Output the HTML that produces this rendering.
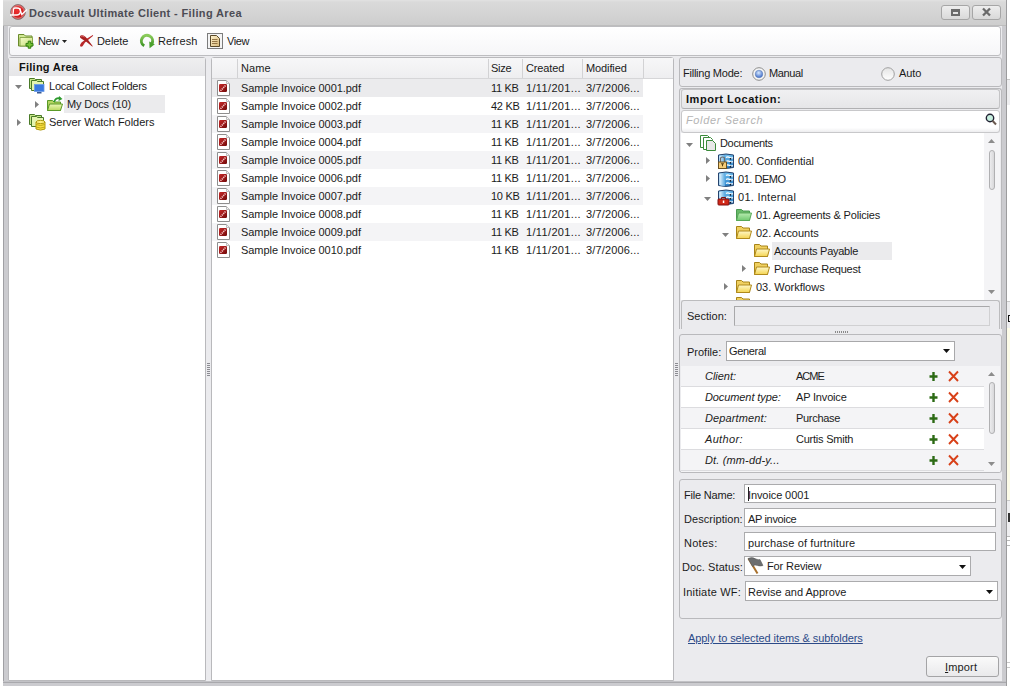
<!DOCTYPE html><html><head><meta charset="utf-8"><style>
*{box-sizing:border-box;margin:0;padding:0}
html,body{width:1010px;height:686px;overflow:hidden;background:#fff;font-family:"Liberation Sans",sans-serif;font-size:11px;color:#1b1b1b}
.a{position:absolute}
.t{position:absolute;white-space:nowrap;line-height:13px}
svg{position:absolute;overflow:visible}
</style></head><body>
<div class="a" style="left:1007px;top:0px;width:3px;height:686px;background:#fff"></div>
<div class="a" style="left:1007px;top:79px;width:3px;height:26px;background:#eeeef0;border-top:1px solid #c8c8c8"></div>
<div class="a" style="left:1007px;top:301px;width:3px;height:27px;background:#eeeef0;border-top:1px solid #c8c8c8"></div>
<div class="a" style="left:1008px;top:315px;width:2px;height:7px;border:1.5px solid #111;border-right:none"></div>
<div class="a" style="left:1007px;top:328px;width:3px;height:172px;background:#fdfce8"></div>
<div class="a" style="left:1007px;top:500px;width:3px;height:36px;background:#eeeef0;border-top:1px solid #c8c8c8"></div>
<div class="a" style="left:1008px;top:513px;width:2px;height:9px;background:#333"></div>
<div class="a" style="left:1007px;top:536px;width:3px;height:1px;background:#b8b8b8"></div>
<div class="a" style="left:1007px;top:540px;width:3px;height:1px;background:#b8b8b8"></div>
<div class="a" style="left:1007px;top:545px;width:3px;height:1px;background:#b8b8b8"></div>
<div class="a" style="left:1007px;top:662px;width:3px;height:1px;background:#c8c8c8"></div>
<div class="a" style="left:1007px;top:667px;width:3px;height:1px;background:#c8c8c8"></div>
<div class="a" style="left:3px;top:0px;width:1004px;height:686px;background:#cbcbcf;border-left:1px solid #a0a0a4;border-right:1px solid #9c9c9e"></div>
<div class="a" style="left:8px;top:26px;width:994px;height:655px;background:#ebebee"></div>
<div class="a" style="left:3px;top:0px;width:1003px;height:26px;background:linear-gradient(#e2e2e2 0,#dadada 2px,#cdcdcd 100%)"></div>
<div class="a" style="left:3px;top:25px;width:1003px;height:1px;background:#bdbdbd"></div>
<div class="a" style="left:3px;top:681px;width:1003px;height:5px;background:#cbcbcf"></div>
<div class="a" style="left:3px;top:681px;width:1003px;height:1px;background:#c2c2c6"></div>
<div class="a" style="left:3px;top:682px;width:1003px;height:1px;background:#a9a9ad"></div>
<svg style="left:9px;top:3px" width="19" height="19" viewBox="0 0 19 19"><defs><radialGradient id="lg" cx="45%" cy="40%" r="60%"><stop offset="0" stop-color="#f03030"/><stop offset="1" stop-color="#c01818"/></radialGradient></defs><circle cx="9" cy="9" r="7.4" fill="url(#lg)" stroke="#8a7a7a" stroke-width="1"/><circle cx="9" cy="9" r="6.3" fill="none" stroke="#f8c8c8" stroke-width="0.6"/><path d="M1 12 L8 12 Q11.5 11.5 11.5 8 Q11.5 5 8 5 L6 5 Q4.5 5 4.5 6.5 L4 11.8" fill="none" stroke="#fff" stroke-width="1.3"/><path d="M10.5 5 L12.8 11.5 L18 6.5" fill="none" stroke="#fff" stroke-width="1.3"/></svg>
<div class="t" style="left:29px;top:7px;font-size:11px;color:#4c4c54;font-weight:bold;letter-spacing:0.36px">Docsvault Ultimate Client - Filing Area</div>
<div class="a" style="left:941px;top:5px;width:29px;height:15px;border:1px solid #a6a6a6;border-radius:3px;background:linear-gradient(#eeeeee,#d9d9d9)"></div>
<div class="a" style="left:972px;top:5px;width:29px;height:15px;border:1px solid #a6a6a6;border-radius:3px;background:linear-gradient(#eeeeee,#d9d9d9)"></div>
<div class="a" style="left:951px;top:9px;width:9px;height:7px;border:2px solid #6b6b6b;border-top-width:3px"></div>
<svg style="left:982px;top:8px" width="9" height="8" viewBox="0 0 9 8"><path d="M1 0.5 L8 7.5 M8 0.5 L1 7.5" stroke="#6b6b6b" stroke-width="2.3"/></svg>
<div class="a" style="left:9px;top:26px;width:992px;height:30px;border:1px solid #bdbdc0;border-radius:3px;background:linear-gradient(#ffffff,#f6f6f8)"></div>
<svg style="left:18px;top:34px" width="17" height="15" viewBox="0 0 17 15"><defs><linearGradient id="fg" x1="0" y1="0" x2="1" y2="1"><stop offset="0" stop-color="#f4fcc8"/><stop offset="1" stop-color="#c4dc78"/></linearGradient></defs><path d="M0.5 0.5 h5.5 l1.5 1.5 h6.5 v10 h-13.5z" fill="#d0e894" stroke="#6a8a2c"/><path d="M2 3.5 h12.5 v8.5 h-12.5z" fill="url(#fg)" stroke="#7a9a38" stroke-width="0.8"/><path d="M10.2 7.2 h2.6 v2.2 h2.2 v2.6 h-2.2 v2.2 h-2.6 v-2.2 h-2.2 v-2.6 h2.2 z" fill="#78c436" stroke="#2e7a10" stroke-width="1"/></svg>
<div class="t" style="left:38px;top:35px;font-size:11px;;letter-spacing:-0.4px">New</div>
<svg style="left:62px;top:40px" width="5" height="3" viewBox="0 0 5 3"><path d="M0 0 L5 0 L2.5 3 Z" fill="#222"/></svg>
<svg style="left:76px;top:30px" width="22" height="22" viewBox="0 0 22 22"><path d="M16.8 5 L17.2 5.8 L9 12.5 L6.5 16.3 Q4.5 17.5 4 15.5 Q4 14.5 5.5 12.5 L9.5 9.5 Z" fill="#b8282a"/><path d="M4 6.5 Q4.5 4.5 7.5 5.5 Q9.5 6.5 11 8.5 L16.8 16.3 L16.2 16.6 L10 11.5 Q6 9 4.8 8.3 Q3.8 7.5 4 6.5 Z" fill="#a82020"/><path d="M5 6.3 Q6.5 5.6 8.5 7" stroke="#e07070" stroke-width="0.8" fill="none"/></svg>
<div class="t" style="left:97px;top:35px;font-size:11px;;letter-spacing:-0.08px">Delete</div>
<svg style="left:139px;top:33px" width="16" height="16" viewBox="0 0 16 16"><defs><linearGradient id="rf" x1="0" y1="0" x2="0" y2="1"><stop offset="0" stop-color="#8ccc5c"/><stop offset="1" stop-color="#3e9424"/></linearGradient></defs><path d="M5.2 12.8 A5.6 5.6 0 1 1 12.9 10.6" fill="none" stroke="url(#rf)" stroke-width="3"/><path d="M15.8 11.2 L10.2 8.6 L10.6 15.2 Z" fill="#4aa02c"/></svg>
<div class="t" style="left:158px;top:35px;font-size:11px;;letter-spacing:0.15px">Refresh</div>
<svg style="left:207px;top:33px" width="16" height="16" viewBox="0 0 16 16"><rect x="0.5" y="0.5" width="15" height="15" fill="#f4f4f4" stroke="#7c7c7c"/><defs><linearGradient id="vw" x1="0" y1="0" x2="1" y2="1"><stop offset="0" stop-color="#fff4d0"/><stop offset="1" stop-color="#d8b878"/></linearGradient></defs><path d="M3.5 2.5 h6 l3 3 v8 h-9z" fill="url(#vw)" stroke="#5a4a2a"/><path d="M5 6.5 h5.5 M5 8.5 h5.5 M5 10.5 h5.5" stroke="#8a6a3a" stroke-width="0.9"/></svg>
<div class="t" style="left:227px;top:35px;font-size:11px;;letter-spacing:-0.4px">View</div>
<div class="a" style="left:8px;top:57px;width:198px;height:624px;background:#fff;border:1px solid #b9b9bc;border-radius:3px 3px 0 0"></div>
<div class="a" style="left:9px;top:58px;width:196px;height:18px;background:linear-gradient(#efeff0,#e6e6e8)"></div>
<div class="t" style="left:19px;top:61px;font-size:11px;font-weight:bold;color:#111;letter-spacing:0.25px">Filing Area</div>
<svg style="left:15px;top:85px" width="7" height="4" viewBox="0 0 7 4"><path d="M0 0 L7 0 L3.5 4 Z" fill="#808080"/></svg>
<svg style="left:29px;top:78px" width="16" height="17" viewBox="0 0 16 17"><path d="M0.5 0.5 h5 l1 1 h6 v9 h-12z" fill="#c8e888" stroke="#4a7a28"/><path d="M2.5 2.5 h5 l1 1 h6 v9 h-12z" fill="#e4f4b0" stroke="#4a7a28"/><rect x="5.5" y="6.5" width="9.5" height="7" fill="#3a7ae0" stroke="#6a9ae8" stroke-width="0.8"/><rect x="8" y="14" width="4.5" height="1.5" fill="#3a5a90"/></svg>
<div class="t" style="left:49px;top:80px;font-size:11px;;letter-spacing:-0.23px">Local Collect Folders</div>
<div class="a" style="left:64px;top:95px;width:101px;height:18px;background:#ebebed"></div>
<svg style="left:35px;top:101px" width="4" height="7" viewBox="0 0 4 7"><path d="M0 0 L0 7 L4 3.5 Z" fill="#808080"/></svg>
<svg style="left:47px;top:96px" width="16" height="16" viewBox="0 0 16 16"><defs><linearGradient id="mg" x1="0" y1="0" x2="0" y2="1"><stop offset="0" stop-color="#eef8b8"/><stop offset="1" stop-color="#b8d860"/></linearGradient></defs><path d="M0.5 4.5 h5 l1.5 1.5 h6.5 v8.5 h-13z" fill="#b4d460" stroke="#5a9a28"/><path d="M0.5 14.5 L2.5 8 H15.5 L13.5 14.5 Z" fill="url(#mg)" stroke="#5a9a28"/><path d="M7 6 Q9 1 13.5 2.5" fill="none" stroke="#2e9a2e" stroke-width="1.8"/><path d="M12 0 L15.5 3 L11.5 5 Z" fill="#2e9a2e"/></svg>
<div class="t" style="left:67px;top:98px;font-size:11px;;letter-spacing:-0.12px">My Docs (10)</div>
<svg style="left:17px;top:119px" width="4" height="7" viewBox="0 0 4 7"><path d="M0 0 L0 7 L4 3.5 Z" fill="#808080"/></svg>
<svg style="left:29px;top:114px" width="17" height="17" viewBox="0 0 17 17"><path d="M0.5 0.5 h5 l1 1 h6 v9 h-12z" fill="#c8e888" stroke="#4a7a28"/><path d="M2.5 2.5 h5 l1 1 h6 v9 h-12z" fill="#e4f4b0" stroke="#4a7a28"/><path d="M7 8 v7 q4.5 2.2 9 0 v-7" fill="#f8e040" stroke="#b09a10"/><ellipse cx="11.5" cy="8" rx="4.5" ry="1.6" fill="#fff080" stroke="#b09a10"/><path d="M7 10.5 q4.5 2 9 0 M7 13 q4.5 2 9 0" fill="none" stroke="#c0a818"/></svg>
<div class="t" style="left:49px;top:116px;font-size:11px;;letter-spacing:-0.03px">Server Watch Folders</div>
<div class="a" style="left:207px;top:363px;width:3px;height:1px;background:#8c8c92"></div>
<div class="a" style="left:207px;top:365px;width:3px;height:1px;background:#8c8c92"></div>
<div class="a" style="left:207px;top:367px;width:3px;height:1px;background:#8c8c92"></div>
<div class="a" style="left:207px;top:369px;width:3px;height:1px;background:#8c8c92"></div>
<div class="a" style="left:207px;top:371px;width:3px;height:1px;background:#8c8c92"></div>
<div class="a" style="left:207px;top:373px;width:3px;height:1px;background:#8c8c92"></div>
<div class="a" style="left:207px;top:375px;width:3px;height:1px;background:#8c8c92"></div>
<div class="a" style="left:211px;top:57px;width:463px;height:624px;background:#fff;border:1px solid #b9b9bc;border-radius:3px 3px 0 0"></div>
<div class="a" style="left:212px;top:58px;width:461px;height:20px;background:linear-gradient(#f7f7f8,#eeeef0)"></div>
<div class="a" style="left:212px;top:78px;width:461px;height:1px;background:#d6d6d8"></div>
<div class="a" style="left:237px;top:59px;width:1px;height:19px;background:#d2d2d4"></div>
<div class="a" style="left:488px;top:59px;width:1px;height:19px;background:#d2d2d4"></div>
<div class="a" style="left:522px;top:59px;width:1px;height:19px;background:#d2d2d4"></div>
<div class="a" style="left:582px;top:59px;width:1px;height:19px;background:#d2d2d4"></div>
<div class="a" style="left:643px;top:59px;width:1px;height:19px;background:#d2d2d4"></div>
<div class="t" style="left:241px;top:62px;font-size:11px;;letter-spacing:0.1px">Name</div>
<div class="t" style="left:491px;top:62px;font-size:11px;;letter-spacing:-0.3px">Size</div>
<div class="t" style="left:526px;top:62px;font-size:11px;;letter-spacing:-0.13px">Created</div>
<div class="t" style="left:586px;top:62px;font-size:11px;;letter-spacing:-0.11px">Modified</div>
<div class="a" style="left:212px;top:79px;width:431px;height:18px;background:#ebebed"></div>
<svg style="left:216px;top:80px" width="15" height="17" viewBox="0 0 15 17"><path d="M1.5 0.5 h9 l3 3 v12 h-12z" fill="#fff" stroke="#8e8e8e"/><path d="M10.5 0.5 v3 h3" fill="#f4f4f4" stroke="#c0c0c0"/><defs><linearGradient id="pg" x1="0" y1="0" x2="1" y2="1"><stop offset="0" stop-color="#c82828"/><stop offset="1" stop-color="#700a0a"/></linearGradient></defs><rect x="3" y="4" width="8" height="8" rx="1.2" fill="url(#pg)"/><path d="M4.5 10.8 L9.8 5.2" stroke="#f6c8c8" stroke-width="1.6" stroke-dasharray="1.2 0.8"/></svg>
<div class="t" style="left:241px;top:82px;font-size:11px;;letter-spacing:-0.05px">Sample Invoice 0001.pdf</div>
<div class="t" style="left:491px;top:82px;font-size:11px;;letter-spacing:-0.3px">11 KB</div>
<div class="t" style="left:526px;top:82px;font-size:11px;;letter-spacing:0.35px">1/11/201...</div>
<div class="t" style="left:586px;top:82px;font-size:11px;;letter-spacing:0.15px">3/7/2006...</div>
<svg style="left:216px;top:98px" width="15" height="17" viewBox="0 0 15 17"><path d="M1.5 0.5 h9 l3 3 v12 h-12z" fill="#fff" stroke="#8e8e8e"/><path d="M10.5 0.5 v3 h3" fill="#f4f4f4" stroke="#c0c0c0"/><defs><linearGradient id="pg" x1="0" y1="0" x2="1" y2="1"><stop offset="0" stop-color="#c82828"/><stop offset="1" stop-color="#700a0a"/></linearGradient></defs><rect x="3" y="4" width="8" height="8" rx="1.2" fill="url(#pg)"/><path d="M4.5 10.8 L9.8 5.2" stroke="#f6c8c8" stroke-width="1.6" stroke-dasharray="1.2 0.8"/></svg>
<div class="t" style="left:241px;top:100px;font-size:11px;;letter-spacing:-0.05px">Sample Invoice 0002.pdf</div>
<div class="t" style="left:491px;top:100px;font-size:11px;;letter-spacing:-0.3px">42 KB</div>
<div class="t" style="left:526px;top:100px;font-size:11px;;letter-spacing:0.35px">1/11/201...</div>
<div class="t" style="left:586px;top:100px;font-size:11px;;letter-spacing:0.15px">3/7/2006...</div>
<div class="a" style="left:212px;top:115px;width:431px;height:18px;background:#f4f4f6"></div>
<svg style="left:216px;top:116px" width="15" height="17" viewBox="0 0 15 17"><path d="M1.5 0.5 h9 l3 3 v12 h-12z" fill="#fff" stroke="#8e8e8e"/><path d="M10.5 0.5 v3 h3" fill="#f4f4f4" stroke="#c0c0c0"/><defs><linearGradient id="pg" x1="0" y1="0" x2="1" y2="1"><stop offset="0" stop-color="#c82828"/><stop offset="1" stop-color="#700a0a"/></linearGradient></defs><rect x="3" y="4" width="8" height="8" rx="1.2" fill="url(#pg)"/><path d="M4.5 10.8 L9.8 5.2" stroke="#f6c8c8" stroke-width="1.6" stroke-dasharray="1.2 0.8"/></svg>
<div class="t" style="left:241px;top:118px;font-size:11px;;letter-spacing:-0.05px">Sample Invoice 0003.pdf</div>
<div class="t" style="left:491px;top:118px;font-size:11px;;letter-spacing:-0.3px">11 KB</div>
<div class="t" style="left:526px;top:118px;font-size:11px;;letter-spacing:0.35px">1/11/201...</div>
<div class="t" style="left:586px;top:118px;font-size:11px;;letter-spacing:0.15px">3/7/2006...</div>
<svg style="left:216px;top:134px" width="15" height="17" viewBox="0 0 15 17"><path d="M1.5 0.5 h9 l3 3 v12 h-12z" fill="#fff" stroke="#8e8e8e"/><path d="M10.5 0.5 v3 h3" fill="#f4f4f4" stroke="#c0c0c0"/><defs><linearGradient id="pg" x1="0" y1="0" x2="1" y2="1"><stop offset="0" stop-color="#c82828"/><stop offset="1" stop-color="#700a0a"/></linearGradient></defs><rect x="3" y="4" width="8" height="8" rx="1.2" fill="url(#pg)"/><path d="M4.5 10.8 L9.8 5.2" stroke="#f6c8c8" stroke-width="1.6" stroke-dasharray="1.2 0.8"/></svg>
<div class="t" style="left:241px;top:136px;font-size:11px;;letter-spacing:-0.05px">Sample Invoice 0004.pdf</div>
<div class="t" style="left:491px;top:136px;font-size:11px;;letter-spacing:-0.3px">11 KB</div>
<div class="t" style="left:526px;top:136px;font-size:11px;;letter-spacing:0.35px">1/11/201...</div>
<div class="t" style="left:586px;top:136px;font-size:11px;;letter-spacing:0.15px">3/7/2006...</div>
<div class="a" style="left:212px;top:151px;width:431px;height:18px;background:#f4f4f6"></div>
<svg style="left:216px;top:152px" width="15" height="17" viewBox="0 0 15 17"><path d="M1.5 0.5 h9 l3 3 v12 h-12z" fill="#fff" stroke="#8e8e8e"/><path d="M10.5 0.5 v3 h3" fill="#f4f4f4" stroke="#c0c0c0"/><defs><linearGradient id="pg" x1="0" y1="0" x2="1" y2="1"><stop offset="0" stop-color="#c82828"/><stop offset="1" stop-color="#700a0a"/></linearGradient></defs><rect x="3" y="4" width="8" height="8" rx="1.2" fill="url(#pg)"/><path d="M4.5 10.8 L9.8 5.2" stroke="#f6c8c8" stroke-width="1.6" stroke-dasharray="1.2 0.8"/></svg>
<div class="t" style="left:241px;top:154px;font-size:11px;;letter-spacing:-0.05px">Sample Invoice 0005.pdf</div>
<div class="t" style="left:491px;top:154px;font-size:11px;;letter-spacing:-0.3px">11 KB</div>
<div class="t" style="left:526px;top:154px;font-size:11px;;letter-spacing:0.35px">1/11/201...</div>
<div class="t" style="left:586px;top:154px;font-size:11px;;letter-spacing:0.15px">3/7/2006...</div>
<svg style="left:216px;top:170px" width="15" height="17" viewBox="0 0 15 17"><path d="M1.5 0.5 h9 l3 3 v12 h-12z" fill="#fff" stroke="#8e8e8e"/><path d="M10.5 0.5 v3 h3" fill="#f4f4f4" stroke="#c0c0c0"/><defs><linearGradient id="pg" x1="0" y1="0" x2="1" y2="1"><stop offset="0" stop-color="#c82828"/><stop offset="1" stop-color="#700a0a"/></linearGradient></defs><rect x="3" y="4" width="8" height="8" rx="1.2" fill="url(#pg)"/><path d="M4.5 10.8 L9.8 5.2" stroke="#f6c8c8" stroke-width="1.6" stroke-dasharray="1.2 0.8"/></svg>
<div class="t" style="left:241px;top:172px;font-size:11px;;letter-spacing:-0.05px">Sample Invoice 0006.pdf</div>
<div class="t" style="left:491px;top:172px;font-size:11px;;letter-spacing:-0.3px">11 KB</div>
<div class="t" style="left:526px;top:172px;font-size:11px;;letter-spacing:0.35px">1/11/201...</div>
<div class="t" style="left:586px;top:172px;font-size:11px;;letter-spacing:0.15px">3/7/2006...</div>
<div class="a" style="left:212px;top:187px;width:431px;height:18px;background:#f4f4f6"></div>
<svg style="left:216px;top:188px" width="15" height="17" viewBox="0 0 15 17"><path d="M1.5 0.5 h9 l3 3 v12 h-12z" fill="#fff" stroke="#8e8e8e"/><path d="M10.5 0.5 v3 h3" fill="#f4f4f4" stroke="#c0c0c0"/><defs><linearGradient id="pg" x1="0" y1="0" x2="1" y2="1"><stop offset="0" stop-color="#c82828"/><stop offset="1" stop-color="#700a0a"/></linearGradient></defs><rect x="3" y="4" width="8" height="8" rx="1.2" fill="url(#pg)"/><path d="M4.5 10.8 L9.8 5.2" stroke="#f6c8c8" stroke-width="1.6" stroke-dasharray="1.2 0.8"/></svg>
<div class="t" style="left:241px;top:190px;font-size:11px;;letter-spacing:-0.05px">Sample Invoice 0007.pdf</div>
<div class="t" style="left:491px;top:190px;font-size:11px;;letter-spacing:-0.3px">10 KB</div>
<div class="t" style="left:526px;top:190px;font-size:11px;;letter-spacing:0.35px">1/11/201...</div>
<div class="t" style="left:586px;top:190px;font-size:11px;;letter-spacing:0.15px">3/7/2006...</div>
<svg style="left:216px;top:206px" width="15" height="17" viewBox="0 0 15 17"><path d="M1.5 0.5 h9 l3 3 v12 h-12z" fill="#fff" stroke="#8e8e8e"/><path d="M10.5 0.5 v3 h3" fill="#f4f4f4" stroke="#c0c0c0"/><defs><linearGradient id="pg" x1="0" y1="0" x2="1" y2="1"><stop offset="0" stop-color="#c82828"/><stop offset="1" stop-color="#700a0a"/></linearGradient></defs><rect x="3" y="4" width="8" height="8" rx="1.2" fill="url(#pg)"/><path d="M4.5 10.8 L9.8 5.2" stroke="#f6c8c8" stroke-width="1.6" stroke-dasharray="1.2 0.8"/></svg>
<div class="t" style="left:241px;top:208px;font-size:11px;;letter-spacing:-0.05px">Sample Invoice 0008.pdf</div>
<div class="t" style="left:491px;top:208px;font-size:11px;;letter-spacing:-0.3px">11 KB</div>
<div class="t" style="left:526px;top:208px;font-size:11px;;letter-spacing:0.35px">1/11/201...</div>
<div class="t" style="left:586px;top:208px;font-size:11px;;letter-spacing:0.15px">3/7/2006...</div>
<div class="a" style="left:212px;top:223px;width:431px;height:18px;background:#f4f4f6"></div>
<svg style="left:216px;top:224px" width="15" height="17" viewBox="0 0 15 17"><path d="M1.5 0.5 h9 l3 3 v12 h-12z" fill="#fff" stroke="#8e8e8e"/><path d="M10.5 0.5 v3 h3" fill="#f4f4f4" stroke="#c0c0c0"/><defs><linearGradient id="pg" x1="0" y1="0" x2="1" y2="1"><stop offset="0" stop-color="#c82828"/><stop offset="1" stop-color="#700a0a"/></linearGradient></defs><rect x="3" y="4" width="8" height="8" rx="1.2" fill="url(#pg)"/><path d="M4.5 10.8 L9.8 5.2" stroke="#f6c8c8" stroke-width="1.6" stroke-dasharray="1.2 0.8"/></svg>
<div class="t" style="left:241px;top:226px;font-size:11px;;letter-spacing:-0.05px">Sample Invoice 0009.pdf</div>
<div class="t" style="left:491px;top:226px;font-size:11px;;letter-spacing:-0.3px">11 KB</div>
<div class="t" style="left:526px;top:226px;font-size:11px;;letter-spacing:0.35px">1/11/201...</div>
<div class="t" style="left:586px;top:226px;font-size:11px;;letter-spacing:0.15px">3/7/2006...</div>
<svg style="left:216px;top:242px" width="15" height="17" viewBox="0 0 15 17"><path d="M1.5 0.5 h9 l3 3 v12 h-12z" fill="#fff" stroke="#8e8e8e"/><path d="M10.5 0.5 v3 h3" fill="#f4f4f4" stroke="#c0c0c0"/><defs><linearGradient id="pg" x1="0" y1="0" x2="1" y2="1"><stop offset="0" stop-color="#c82828"/><stop offset="1" stop-color="#700a0a"/></linearGradient></defs><rect x="3" y="4" width="8" height="8" rx="1.2" fill="url(#pg)"/><path d="M4.5 10.8 L9.8 5.2" stroke="#f6c8c8" stroke-width="1.6" stroke-dasharray="1.2 0.8"/></svg>
<div class="t" style="left:241px;top:244px;font-size:11px;;letter-spacing:-0.05px">Sample Invoice 0010.pdf</div>
<div class="t" style="left:491px;top:244px;font-size:11px;;letter-spacing:-0.3px">11 KB</div>
<div class="t" style="left:526px;top:244px;font-size:11px;;letter-spacing:0.35px">1/11/201...</div>
<div class="t" style="left:586px;top:244px;font-size:11px;;letter-spacing:0.15px">3/7/2006...</div>
<div class="a" style="left:675px;top:363px;width:3px;height:1px;background:#8c8c92"></div>
<div class="a" style="left:675px;top:365px;width:3px;height:1px;background:#8c8c92"></div>
<div class="a" style="left:675px;top:367px;width:3px;height:1px;background:#8c8c92"></div>
<div class="a" style="left:675px;top:369px;width:3px;height:1px;background:#8c8c92"></div>
<div class="a" style="left:675px;top:371px;width:3px;height:1px;background:#8c8c92"></div>
<div class="a" style="left:675px;top:373px;width:3px;height:1px;background:#8c8c92"></div>
<div class="a" style="left:675px;top:375px;width:3px;height:1px;background:#8c8c92"></div>
<div class="a" style="left:679px;top:57px;width:323px;height:30px;background:#ebebee;border:1px solid #b9b9bc;border-radius:3px"></div>
<div class="t" style="left:683px;top:67px;font-size:11px;;letter-spacing:-0.24px">Filling Mode:</div>
<svg style="left:752px;top:67px" width="14" height="14" viewBox="0 0 14 14"><defs><radialGradient id="rg" cx="45%" cy="35%" r="65%"><stop offset="0" stop-color="#d8eaff"/><stop offset="1" stop-color="#3a68c8"/></radialGradient></defs><circle cx="7" cy="7" r="6.3" fill="#f6f6f6" stroke="#8c8c8c"/><circle cx="7" cy="7" r="3.8" fill="url(#rg)" stroke="#5a7ab0" stroke-width="0.5"/></svg>
<div class="t" style="left:769px;top:67px;font-size:11px;;letter-spacing:-0.4px">Manual</div>
<svg style="left:881px;top:67px" width="14" height="14" viewBox="0 0 14 14"><defs><linearGradient id="rw" x1="0" y1="0" x2="0" y2="1"><stop offset="0" stop-color="#e4e4e4"/><stop offset="1" stop-color="#ffffff"/></linearGradient></defs><circle cx="7" cy="7" r="6.3" fill="url(#rw)" stroke="#a0a0a0"/></svg>
<div class="t" style="left:899px;top:67px;font-size:11px;;letter-spacing:-0.07px">Auto</div>
<div class="a" style="left:679px;top:88px;width:323px;height:241px;background:#ebebee;border:1px solid #b9b9bc;border-bottom:none;border-radius:3px 3px 0 0"></div>
<div class="a" style="left:681px;top:89px;width:319px;height:20px;background:linear-gradient(#f0f0f2,#e6e6e8);border:1px solid #c4c4c6;border-bottom-color:#b0b0b2;border-radius:3px"></div>
<div class="t" style="left:686px;top:93px;font-size:11px;font-weight:bold;color:#111;letter-spacing:0.53px">Import Location:</div>
<div class="a" style="left:681px;top:110px;width:319px;height:23px;background:linear-gradient(#fff 0,#fff 80%,#ededef 100%);border:1px solid #c8c8ca;border-radius:3px"></div>
<div class="t" style="left:686px;top:114px;font-size:11px;font-style:italic;color:#b4b4b4;letter-spacing:0.63px">Folder Search</div>
<svg style="left:985px;top:113px" width="12" height="13" viewBox="0 0 12 13"><circle cx="5" cy="5" r="3.7" fill="#c8f0e0" stroke="#223" stroke-width="1.4"/><path d="M7.5 7.8 L11 11.5" stroke="#6a5a50" stroke-width="2"/></svg>
<div class="a" style="left:681px;top:133px;width:319px;height:167px;background:#fff"></div>
<div class="a" style="left:984px;top:133px;width:16px;height:167px;background:#f4f4f6"></div>
<svg style="left:988px;top:139px" width="7" height="4" viewBox="0 0 7 4"><path d="M0 4 L7 4 L3.5 0 Z" fill="#8c8c8c"/></svg>
<div class="a" style="left:989px;top:150px;width:6px;height:40px;background:linear-gradient(90deg,#ececee,#d8d8da);border:1px solid #b0b0b2;border-radius:3px"></div>
<svg style="left:988px;top:290px" width="7" height="4" viewBox="0 0 7 4"><path d="M0 0 L7 0 L3.5 4 Z" fill="#8c8c8c"/></svg>
<svg style="left:686px;top:143px" width="7" height="4" viewBox="0 0 7 4"><path d="M0 0 L7 0 L3.5 4 Z" fill="#808080"/></svg>
<svg style="left:700px;top:135px" width="16" height="16" viewBox="0 0 16 16"><path d="M0.5 0.5 h7 l2 2 v10 h-9z" fill="#fff" stroke="#3a8a3a"/><path d="M3.5 2.5 h7 l2 2 v10 h-9z" fill="#fff" stroke="#3a8a3a"/><path d="M6.5 5.5 h6 l3 3 v7 h-9z" fill="#e8e8e8" stroke="#3a8a3a"/></svg>
<div class="t" style="left:720px;top:137px;font-size:11px;;letter-spacing:-0.34px">Documents</div>
<svg style="left:706px;top:157px" width="4" height="7" viewBox="0 0 4 7"><path d="M0 0 L0 7 L4 3.5 Z" fill="#808080"/></svg>
<svg style="left:718px;top:153px" width="16" height="16" viewBox="0 0 16 16"><defs><linearGradient id="cbL" x1="0" y1="0" x2="1" y2="0"><stop offset="0" stop-color="#e8f6ff"/><stop offset="1" stop-color="#58a8e0"/></linearGradient><linearGradient id="cbR" x1="0" y1="0" x2="0" y2="1"><stop offset="0" stop-color="#70c0f0"/><stop offset="1" stop-color="#2a80c8"/></linearGradient></defs><path d="M0.5 2 Q8 0 15.5 2 V14.5 Q8 16.3 0.5 14.5 Z" fill="url(#cbR)" stroke="#24426c"/><path d="M1.3 2.8 Q4 2 7 2 V15 Q4 15.2 1.3 14 Z" fill="url(#cbL)"/><path d="M8 4.5 q1.8 -1.2 3.6 0 t3.2 0 M8 8.5 q1.8 -1.2 3.6 0 t3.2 0 M8 12.5 q1.8 -1.2 3.6 0 t3.2 0" stroke="#fff" stroke-width="1.4" fill="none"/><circle cx="12.5" cy="5.8" r="0.9" fill="#0a1a30"/><circle cx="12.5" cy="9.8" r="0.9" fill="#0a1a30"/><circle cx="12.5" cy="13.6" r="0.9" fill="#0a1a30"/><path d="M2.5 9 V5.5 Q2.5 4 4.5 4 Q6.5 4 6.5 5.5 V9" fill="none" stroke="#6a6a6a" stroke-width="1.2"/><rect x="0.5" y="9" width="8" height="6.5" fill="#f4cc78" stroke="#6a5020"/><path d="M3 10.8 h3 M4.5 10.8 v2.5" stroke="#5a4010"/></svg>
<div class="t" style="left:738px;top:155px;font-size:11px;;letter-spacing:-0.03px">00. Confidential</div>
<svg style="left:706px;top:175px" width="4" height="7" viewBox="0 0 4 7"><path d="M0 0 L0 7 L4 3.5 Z" fill="#808080"/></svg>
<svg style="left:718px;top:171px" width="16" height="16" viewBox="0 0 16 16"><defs><linearGradient id="cbL" x1="0" y1="0" x2="1" y2="0"><stop offset="0" stop-color="#e8f6ff"/><stop offset="1" stop-color="#58a8e0"/></linearGradient><linearGradient id="cbR" x1="0" y1="0" x2="0" y2="1"><stop offset="0" stop-color="#70c0f0"/><stop offset="1" stop-color="#2a80c8"/></linearGradient></defs><path d="M0.5 2 Q8 0 15.5 2 V14.5 Q8 16.3 0.5 14.5 Z" fill="url(#cbR)" stroke="#24426c"/><path d="M1.3 2.8 Q4 2 7 2 V15 Q4 15.2 1.3 14 Z" fill="url(#cbL)"/><path d="M8 4.5 q1.8 -1.2 3.6 0 t3.2 0 M8 8.5 q1.8 -1.2 3.6 0 t3.2 0 M8 12.5 q1.8 -1.2 3.6 0 t3.2 0" stroke="#fff" stroke-width="1.4" fill="none"/><circle cx="12.5" cy="5.8" r="0.9" fill="#0a1a30"/><circle cx="12.5" cy="9.8" r="0.9" fill="#0a1a30"/><circle cx="12.5" cy="13.6" r="0.9" fill="#0a1a30"/></svg>
<div class="t" style="left:738px;top:173px;font-size:11px;;letter-spacing:-0.47px">01. DEMO</div>
<svg style="left:704px;top:197px" width="7" height="4" viewBox="0 0 7 4"><path d="M0 0 L7 0 L3.5 4 Z" fill="#808080"/></svg>
<svg style="left:718px;top:189px" width="16" height="16" viewBox="0 0 16 16"><defs><linearGradient id="cbL" x1="0" y1="0" x2="1" y2="0"><stop offset="0" stop-color="#e8f6ff"/><stop offset="1" stop-color="#58a8e0"/></linearGradient><linearGradient id="cbR" x1="0" y1="0" x2="0" y2="1"><stop offset="0" stop-color="#70c0f0"/><stop offset="1" stop-color="#2a80c8"/></linearGradient></defs><path d="M0.5 2 Q8 0 15.5 2 V14.5 Q8 16.3 0.5 14.5 Z" fill="url(#cbR)" stroke="#24426c"/><path d="M1.3 2.8 Q4 2 7 2 V15 Q4 15.2 1.3 14 Z" fill="url(#cbL)"/><path d="M8 4.5 q1.8 -1.2 3.6 0 t3.2 0 M8 8.5 q1.8 -1.2 3.6 0 t3.2 0 M8 12.5 q1.8 -1.2 3.6 0 t3.2 0" stroke="#fff" stroke-width="1.4" fill="none"/><circle cx="12.5" cy="5.8" r="0.9" fill="#0a1a30"/><circle cx="12.5" cy="9.8" r="0.9" fill="#0a1a30"/><circle cx="12.5" cy="13.6" r="0.9" fill="#0a1a30"/><path d="M3.5 10 V8.5 h4 V10" fill="none" stroke="#801010"/><rect x="0" y="10" width="11" height="6" rx="0.8" fill="#d02818" stroke="#801010"/><rect x="4.8" y="11.5" width="1.5" height="2.5" fill="#fff"/></svg>
<div class="t" style="left:738px;top:191px;font-size:11px;;letter-spacing:0.26px">01. Internal</div>
<svg style="left:736px;top:207px" width="16" height="16" viewBox="0 0 16 16"><defs><linearGradient id="gg" x1="0" y1="0" x2="0" y2="1"><stop offset="0" stop-color="#b8ecb0"/><stop offset="1" stop-color="#70c870"/></linearGradient></defs><path d="M0.5 2.5 h5 l1.5 1.5 h6.5 v9.5 h-13z" fill="#68b868" stroke="#4a9a50"/><path d="M0.5 13.5 L2.5 6 H15.5 L13.5 13.5 Z" fill="url(#gg)" stroke="#58a858"/></svg>
<div class="t" style="left:756px;top:209px;font-size:11px;;letter-spacing:-0.17px">01. Agreements &amp; Policies</div>
<svg style="left:722px;top:233px" width="7" height="4" viewBox="0 0 7 4"><path d="M0 0 L7 0 L3.5 4 Z" fill="#808080"/></svg>
<svg style="left:736px;top:225px" width="16" height="16" viewBox="0 0 16 16"><defs><linearGradient id="yg" x1="0" y1="0" x2="0" y2="1"><stop offset="0" stop-color="#fff8c8"/><stop offset="1" stop-color="#f4d450"/></linearGradient></defs><path d="M0.5 1.5 h5 l1.5 1.5 h6.5 v10.5 h-13z" fill="#f0d060" stroke="#a88418"/><path d="M0.5 13.5 L2.5 6 H15.5 L13.5 13.5 Z" fill="url(#yg)" stroke="#b08a1c"/></svg>
<div class="t" style="left:756px;top:227px;font-size:11px;;letter-spacing:-0.03px">02. Accounts</div>
<div class="a" style="left:772px;top:242px;width:120px;height:18px;background:#ebebed"></div>
<svg style="left:754px;top:243px" width="16" height="16" viewBox="0 0 16 16"><defs><linearGradient id="yg" x1="0" y1="0" x2="0" y2="1"><stop offset="0" stop-color="#fff8c8"/><stop offset="1" stop-color="#f4d450"/></linearGradient></defs><path d="M0.5 1.5 h5 l1.5 1.5 h6.5 v10.5 h-13z" fill="#f0d060" stroke="#a88418"/><path d="M0.5 13.5 L2.5 6 H15.5 L13.5 13.5 Z" fill="url(#yg)" stroke="#b08a1c"/></svg>
<div class="t" style="left:774px;top:245px;font-size:11px;;letter-spacing:-0.25px">Accounts Payable</div>
<svg style="left:742px;top:265px" width="4" height="7" viewBox="0 0 4 7"><path d="M0 0 L0 7 L4 3.5 Z" fill="#808080"/></svg>
<svg style="left:754px;top:261px" width="16" height="16" viewBox="0 0 16 16"><defs><linearGradient id="yg" x1="0" y1="0" x2="0" y2="1"><stop offset="0" stop-color="#fff8c8"/><stop offset="1" stop-color="#f4d450"/></linearGradient></defs><path d="M0.5 1.5 h5 l1.5 1.5 h6.5 v10.5 h-13z" fill="#f0d060" stroke="#a88418"/><path d="M0.5 13.5 L2.5 6 H15.5 L13.5 13.5 Z" fill="url(#yg)" stroke="#b08a1c"/></svg>
<div class="t" style="left:774px;top:263px;font-size:11px;;letter-spacing:-0.25px">Purchase Request</div>
<svg style="left:724px;top:283px" width="4" height="7" viewBox="0 0 4 7"><path d="M0 0 L0 7 L4 3.5 Z" fill="#808080"/></svg>
<svg style="left:736px;top:279px" width="16" height="16" viewBox="0 0 16 16"><defs><linearGradient id="yg" x1="0" y1="0" x2="0" y2="1"><stop offset="0" stop-color="#fff8c8"/><stop offset="1" stop-color="#f4d450"/></linearGradient></defs><path d="M0.5 1.5 h5 l1.5 1.5 h6.5 v10.5 h-13z" fill="#f0d060" stroke="#a88418"/><path d="M0.5 13.5 L2.5 6 H15.5 L13.5 13.5 Z" fill="url(#yg)" stroke="#b08a1c"/></svg>
<div class="t" style="left:756px;top:281px;font-size:11px;;letter-spacing:-0.02px">03. Workflows</div>
<svg style="left:736px;top:296px" width="16" height="4" viewBox="0 0 16 4"><path d="M0.5 1.5 h5 l1.5 1.5 h6.5 v2 h-13z" fill="#f0d060" stroke="#a88418"/></svg>
<div class="a" style="left:681px;top:300px;width:319px;height:29px;background:#ebebee;border:1px solid #bcbcbe;border-bottom:none;border-radius:3px 3px 0 0"></div>
<div class="t" style="left:687px;top:310px;font-size:11px;;letter-spacing:0.01px">Section:</div>
<div class="a" style="left:734px;top:306px;width:256px;height:20px;background:#ebebee;border:1px solid #a8a8aa;border-right-color:#d0d0d2;border-bottom-color:#d0d0d2"></div>
<div class="a" style="left:835px;top:331px;width:1px;height:2px;background:#8a8a8a"></div>
<div class="a" style="left:837px;top:331px;width:1px;height:2px;background:#8a8a8a"></div>
<div class="a" style="left:839px;top:331px;width:1px;height:2px;background:#8a8a8a"></div>
<div class="a" style="left:841px;top:331px;width:1px;height:2px;background:#8a8a8a"></div>
<div class="a" style="left:843px;top:331px;width:1px;height:2px;background:#8a8a8a"></div>
<div class="a" style="left:845px;top:331px;width:1px;height:2px;background:#8a8a8a"></div>
<div class="a" style="left:847px;top:331px;width:1px;height:2px;background:#8a8a8a"></div>
<div class="a" style="left:679px;top:334px;width:323px;height:139px;background:#ebebee;border:1px solid #b9b9bc;border-radius:3px"></div>
<div class="t" style="left:687px;top:346px;font-size:11px;">Profile:</div>
<div class="a" style="left:726px;top:341px;width:229px;height:20px;background:#fff;border:1px solid #a8a8aa"></div>
<div class="t" style="left:729px;top:345px;font-size:11px;;letter-spacing:-0.33px">General</div>
<svg style="left:943px;top:349px" width="7" height="4" viewBox="0 0 7 4"><path d="M0 0 L7 0 L3.5 4 Z" fill="#111"/></svg>
<div class="a" style="left:681px;top:366px;width:319px;height:106px;background:#f4f4f6"></div>
<div class="t" style="left:705px;top:370px;font-size:11px;font-style:italic;color:#222;letter-spacing:-0.02px">Client:</div>
<div class="t" style="left:796px;top:370px;font-size:11px;;letter-spacing:-1.0px">ACME</div>
<svg style="left:929px;top:372px" width="10" height="10" viewBox="0 0 10 10"><path d="M4.5 0 v9 M0.5 4.5 h8" stroke="#2c6a14" stroke-width="2.4"/></svg>
<svg style="left:948px;top:371px" width="11" height="11" viewBox="0 0 11 11"><path d="M1 0.5 L10 10 M10 0.5 L1 10" stroke="#d84018" stroke-width="1.9"/></svg>
<div class="a" style="left:681px;top:387px;width:303px;height:21px;background:#fff"></div>
<div class="a" style="left:681px;top:386px;width:303px;height:1px;background:#dcdcdf"></div>
<div class="t" style="left:705px;top:391px;font-size:11px;font-style:italic;color:#222;letter-spacing:-0.1px">Document type:</div>
<div class="t" style="left:796px;top:391px;font-size:11px;;letter-spacing:-0.18px">AP Invoice</div>
<svg style="left:929px;top:393px" width="10" height="10" viewBox="0 0 10 10"><path d="M4.5 0 v9 M0.5 4.5 h8" stroke="#2c6a14" stroke-width="2.4"/></svg>
<svg style="left:948px;top:392px" width="11" height="11" viewBox="0 0 11 11"><path d="M1 0.5 L10 10 M10 0.5 L1 10" stroke="#d84018" stroke-width="1.9"/></svg>
<div class="a" style="left:681px;top:407px;width:303px;height:1px;background:#dcdcdf"></div>
<div class="t" style="left:705px;top:412px;font-size:11px;font-style:italic;color:#222;letter-spacing:0.12px">Department:</div>
<div class="t" style="left:796px;top:412px;font-size:11px;;letter-spacing:-0.29px">Purchase</div>
<svg style="left:929px;top:414px" width="10" height="10" viewBox="0 0 10 10"><path d="M4.5 0 v9 M0.5 4.5 h8" stroke="#2c6a14" stroke-width="2.4"/></svg>
<svg style="left:948px;top:413px" width="11" height="11" viewBox="0 0 11 11"><path d="M1 0.5 L10 10 M10 0.5 L1 10" stroke="#d84018" stroke-width="1.9"/></svg>
<div class="a" style="left:681px;top:429px;width:303px;height:21px;background:#fff"></div>
<div class="a" style="left:681px;top:428px;width:303px;height:1px;background:#dcdcdf"></div>
<div class="t" style="left:705px;top:433px;font-size:11px;font-style:italic;color:#222;letter-spacing:0.33px">Author:</div>
<div class="t" style="left:796px;top:433px;font-size:11px;;letter-spacing:-0.23px">Curtis Smith</div>
<svg style="left:929px;top:435px" width="10" height="10" viewBox="0 0 10 10"><path d="M4.5 0 v9 M0.5 4.5 h8" stroke="#2c6a14" stroke-width="2.4"/></svg>
<svg style="left:948px;top:434px" width="11" height="11" viewBox="0 0 11 11"><path d="M1 0.5 L10 10 M10 0.5 L1 10" stroke="#d84018" stroke-width="1.9"/></svg>
<div class="a" style="left:681px;top:449px;width:303px;height:1px;background:#dcdcdf"></div>
<div class="t" style="left:705px;top:454px;font-size:11px;font-style:italic;color:#222;letter-spacing:0.14px">Dt. (mm-dd-y...</div>
<div class="t" style="left:796px;top:454px;font-size:11px;;letter-spacing:0.1px"></div>
<svg style="left:929px;top:456px" width="10" height="10" viewBox="0 0 10 10"><path d="M4.5 0 v9 M0.5 4.5 h8" stroke="#2c6a14" stroke-width="2.4"/></svg>
<svg style="left:948px;top:455px" width="11" height="11" viewBox="0 0 11 11"><path d="M1 0.5 L10 10 M10 0.5 L1 10" stroke="#d84018" stroke-width="1.9"/></svg>
<div class="a" style="left:681px;top:470px;width:303px;height:1px;background:#dcdcdf"></div>
<svg style="left:988px;top:372px" width="7" height="4" viewBox="0 0 7 4"><path d="M0 4 L7 4 L3.5 0 Z" fill="#8c8c8c"/></svg>
<div class="a" style="left:989px;top:382px;width:6px;height:52px;background:linear-gradient(90deg,#ececee,#d8d8da);border:1px solid #b0b0b2;border-radius:3px"></div>
<svg style="left:988px;top:462px" width="7" height="4" viewBox="0 0 7 4"><path d="M0 0 L7 0 L3.5 4 Z" fill="#8c8c8c"/></svg>
<div class="a" style="left:679px;top:479px;width:323px;height:140px;background:#ebebee;border:1px solid #b9b9bc;border-radius:3px"></div>
<div class="t" style="left:684px;top:489px;font-size:11px;;letter-spacing:-0.2px">File Name:</div>
<div class="a" style="left:744px;top:484px;width:252px;height:19px;background:#fff;border:1px solid #ababad"></div>
<div class="t" style="left:748px;top:489px;font-size:11px;;letter-spacing:-0.1px">Invoice 0001</div>
<div class="t" style="left:684px;top:513px;font-size:11px;;letter-spacing:0.05px">Description:</div>
<div class="a" style="left:744px;top:508px;width:252px;height:19px;background:#fff;border:1px solid #ababad"></div>
<div class="t" style="left:748px;top:513px;font-size:11px;;letter-spacing:-0.34px">AP invoice</div>
<div class="t" style="left:684px;top:537px;font-size:11px;;letter-spacing:0.28px">Notes:</div>
<div class="a" style="left:744px;top:532px;width:252px;height:19px;background:#fff;border:1px solid #ababad"></div>
<div class="t" style="left:748px;top:537px;font-size:11px;;letter-spacing:0.15px">purchase of furtniture</div>
<div class="a" style="left:748px;top:487px;width:1px;height:14px;background:#222"></div>
<div class="t" style="left:682px;top:561px;font-size:11px;;letter-spacing:0.08px">Doc. Status:</div>
<div class="a" style="left:744px;top:556px;width:227px;height:20px;background:#fff;border:1px solid #ababad"></div>
<svg style="left:747px;top:557px" width="17" height="18" viewBox="0 0 17 18"><path d="M1.5 1.5 L10.5 16.5" stroke="#a8702c" stroke-width="2"/><path d="M1 1.5 Q5 -0.5 9 2 Q11.5 3 13 2.5 L16 8.5 Q13 9.5 10.5 8.5 Q7.5 7 5.5 9.5 Z" fill="#6c6e70" stroke="#555" stroke-width="0.5"/></svg>
<div class="t" style="left:767px;top:560px;font-size:11px;;letter-spacing:-0.12px">For Review</div>
<svg style="left:959px;top:565px" width="7" height="4" viewBox="0 0 7 4"><path d="M0 0 L7 0 L3.5 4 Z" fill="#111"/></svg>
<div class="t" style="left:683px;top:586px;font-size:11px;;letter-spacing:0.2px">Initiate WF:</div>
<div class="a" style="left:745px;top:581px;width:253px;height:20px;background:#fff;border:1px solid #ababad"></div>
<div class="t" style="left:748px;top:586px;font-size:11px;">Revise and Approve</div>
<svg style="left:986px;top:590px" width="7" height="4" viewBox="0 0 7 4"><path d="M0 0 L7 0 L3.5 4 Z" fill="#111"/></svg>
<div class="t" style="left:688px;top:632px;font-size:11px;color:#2c4a88;text-decoration:underline;letter-spacing:-0.07px">Apply to selected items &amp; subfolders</div>
<div class="a" style="left:926px;top:656px;width:73px;height:21px;background:linear-gradient(#fafafa,#e9e9eb);border:1px solid #a4a4a6;border-radius:3px"></div>
<div class="t" style="left:945px;top:661px;font-size:11px;;letter-spacing:0.15px"><u>I</u>mport</div>
</body></html>
